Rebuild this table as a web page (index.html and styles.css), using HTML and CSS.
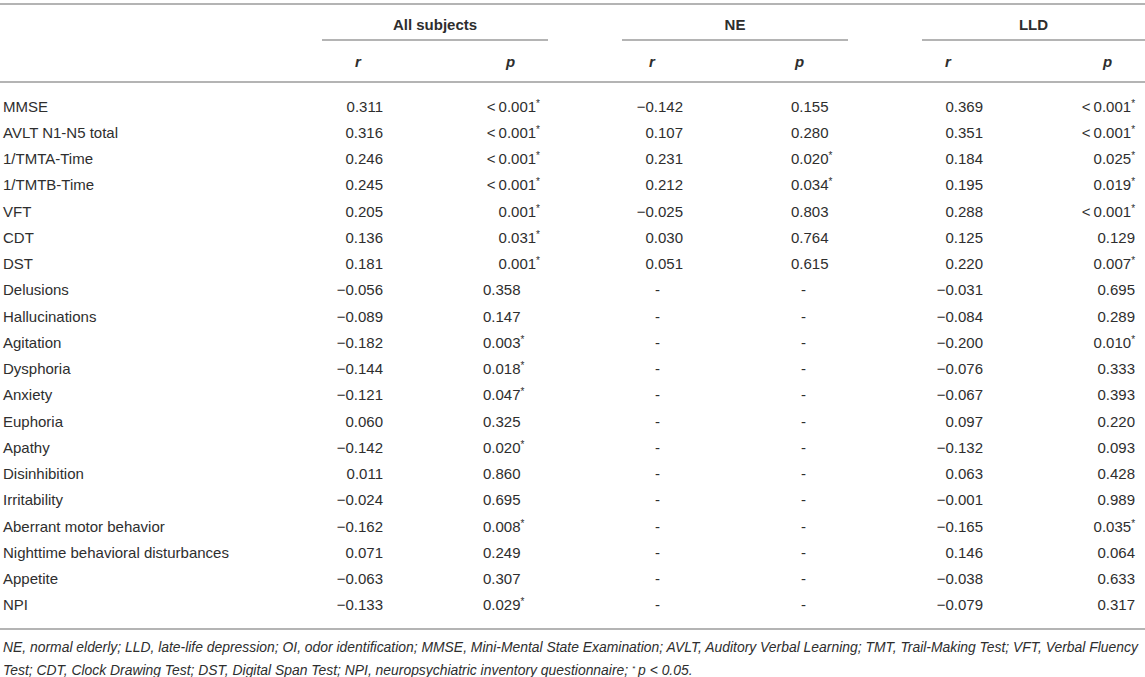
FILE: index.html
```html
<!DOCTYPE html>
<html lang="en">
<head>
    <meta charset="UTF-8">
    <meta name="viewport" content="width=device-width, initial-scale=1.0">
    <title>Correlations between OI and cognitive / NPI scores</title>
    <link rel="stylesheet" href="styles.css">
</head>
<body>
    <div class="wrap">
        <table class="corr">
            <colgroup>
                <col class="c-label">
                <col class="c-num"><col class="c-num">
                <col class="c-gap">
                <col class="c-num"><col class="c-num">
                <col class="c-gap">
                <col class="c-num"><col class="c-last">
            </colgroup>
            <thead>
                <tr class="groups">
                    <th></th>
                    <th colspan="2" class="grp">All subjects</th>
                    <th></th>
                    <th colspan="2" class="grp">NE</th>
                    <th></th>
                    <th colspan="2" class="grp">LLD</th>
                </tr>
                <tr class="stats">
                    <th></th>
                    <th class="h-r g1">r</th><th class="h-p g1">p</th>
                    <th></th>
                    <th class="h-r g2">r</th><th class="h-p g2">p</th>
                    <th></th>
                    <th class="h-r g3">r</th><th class="h-p g3">p</th>
                </tr>
            </thead>
            <tbody>
                <tr class="first">
                    <td class="label">MMSE</td>
                    <td class="r">0.311</td><td class="p-end">&lt;&thinsp;0.001<sup>*</sup></td><td></td>
                    <td class="r">&minus;0.142</td><td class="p-start">0.155</td><td></td>
                    <td class="r">0.369</td><td class="p-last">&lt;&thinsp;0.001<sup>*</sup></td>
                </tr>
                <tr>
                    <td class="label">AVLT N1-N5 total</td>
                    <td class="r">0.316</td><td class="p-end">&lt;&thinsp;0.001<sup>*</sup></td><td></td>
                    <td class="r">0.107</td><td class="p-start">0.280</td><td></td>
                    <td class="r">0.351</td><td class="p-last">&lt;&thinsp;0.001<sup>*</sup></td>
                </tr>
                <tr>
                    <td class="label">1/TMTA-Time</td>
                    <td class="r">0.246</td><td class="p-end">&lt;&thinsp;0.001<sup>*</sup></td><td></td>
                    <td class="r">0.231</td><td class="p-start">0.020<sup>*</sup></td><td></td>
                    <td class="r">0.184</td><td class="p-last">0.025<sup>*</sup></td>
                </tr>
                <tr>
                    <td class="label">1/TMTB-Time</td>
                    <td class="r">0.245</td><td class="p-end">&lt;&thinsp;0.001<sup>*</sup></td><td></td>
                    <td class="r">0.212</td><td class="p-start">0.034<sup>*</sup></td><td></td>
                    <td class="r">0.195</td><td class="p-last">0.019<sup>*</sup></td>
                </tr>
                <tr>
                    <td class="label">VFT</td>
                    <td class="r">0.205</td><td class="p-end">0.001<sup>*</sup></td><td></td>
                    <td class="r">&minus;0.025</td><td class="p-start">0.803</td><td></td>
                    <td class="r">0.288</td><td class="p-last">&lt;&thinsp;0.001<sup>*</sup></td>
                </tr>
                <tr>
                    <td class="label">CDT</td>
                    <td class="r">0.136</td><td class="p-end">0.031<sup>*</sup></td><td></td>
                    <td class="r">0.030</td><td class="p-start">0.764</td><td></td>
                    <td class="r">0.125</td><td class="p-last">0.129</td>
                </tr>
                <tr>
                    <td class="label">DST</td>
                    <td class="r">0.181</td><td class="p-end">0.001<sup>*</sup></td><td></td>
                    <td class="r">0.051</td><td class="p-start">0.615</td><td></td>
                    <td class="r">0.220</td><td class="p-last">0.007<sup>*</sup></td>
                </tr>
                <tr>
                    <td class="label">Delusions</td>
                    <td class="r">&minus;0.056</td><td class="p-mid">0.358</td><td></td>
                    <td class="dash">-</td><td class="dash-p">-</td><td></td>
                    <td class="r">&minus;0.031</td><td class="p-last">0.695</td>
                </tr>
                <tr>
                    <td class="label">Hallucinations</td>
                    <td class="r">&minus;0.089</td><td class="p-mid">0.147</td><td></td>
                    <td class="dash">-</td><td class="dash-p">-</td><td></td>
                    <td class="r">&minus;0.084</td><td class="p-last">0.289</td>
                </tr>
                <tr>
                    <td class="label">Agitation</td>
                    <td class="r">&minus;0.182</td><td class="p-mid">0.003<sup>*</sup></td><td></td>
                    <td class="dash">-</td><td class="dash-p">-</td><td></td>
                    <td class="r">&minus;0.200</td><td class="p-last">0.010<sup>*</sup></td>
                </tr>
                <tr>
                    <td class="label">Dysphoria</td>
                    <td class="r">&minus;0.144</td><td class="p-mid">0.018<sup>*</sup></td><td></td>
                    <td class="dash">-</td><td class="dash-p">-</td><td></td>
                    <td class="r">&minus;0.076</td><td class="p-last">0.333</td>
                </tr>
                <tr>
                    <td class="label">Anxiety</td>
                    <td class="r">&minus;0.121</td><td class="p-mid">0.047<sup>*</sup></td><td></td>
                    <td class="dash">-</td><td class="dash-p">-</td><td></td>
                    <td class="r">&minus;0.067</td><td class="p-last">0.393</td>
                </tr>
                <tr>
                    <td class="label">Euphoria</td>
                    <td class="r">0.060</td><td class="p-mid">0.325</td><td></td>
                    <td class="dash">-</td><td class="dash-p">-</td><td></td>
                    <td class="r">0.097</td><td class="p-last">0.220</td>
                </tr>
                <tr>
                    <td class="label">Apathy</td>
                    <td class="r">&minus;0.142</td><td class="p-mid">0.020<sup>*</sup></td><td></td>
                    <td class="dash">-</td><td class="dash-p">-</td><td></td>
                    <td class="r">&minus;0.132</td><td class="p-last">0.093</td>
                </tr>
                <tr>
                    <td class="label">Disinhibition</td>
                    <td class="r">0.011</td><td class="p-mid">0.860</td><td></td>
                    <td class="dash">-</td><td class="dash-p">-</td><td></td>
                    <td class="r">0.063</td><td class="p-last">0.428</td>
                </tr>
                <tr>
                    <td class="label">Irritability</td>
                    <td class="r">&minus;0.024</td><td class="p-mid">0.695</td><td></td>
                    <td class="dash">-</td><td class="dash-p">-</td><td></td>
                    <td class="r">&minus;0.001</td><td class="p-last">0.989</td>
                </tr>
                <tr>
                    <td class="label">Aberrant motor behavior</td>
                    <td class="r">&minus;0.162</td><td class="p-mid">0.008<sup>*</sup></td><td></td>
                    <td class="dash">-</td><td class="dash-p">-</td><td></td>
                    <td class="r">&minus;0.165</td><td class="p-last">0.035<sup>*</sup></td>
                </tr>
                <tr>
                    <td class="label">Nighttime behavioral disturbances</td>
                    <td class="r">0.071</td><td class="p-mid">0.249</td><td></td>
                    <td class="dash">-</td><td class="dash-p">-</td><td></td>
                    <td class="r">0.146</td><td class="p-last">0.064</td>
                </tr>
                <tr>
                    <td class="label">Appetite</td>
                    <td class="r">&minus;0.063</td><td class="p-mid">0.307</td><td></td>
                    <td class="dash">-</td><td class="dash-p">-</td><td></td>
                    <td class="r">&minus;0.038</td><td class="p-last">0.633</td>
                </tr>
                <tr class="last">
                    <td class="label">NPI</td>
                    <td class="r">&minus;0.133</td><td class="p-mid">0.029<sup>*</sup></td><td></td>
                    <td class="dash">-</td><td class="dash-p">-</td><td></td>
                    <td class="r">&minus;0.079</td><td class="p-last">0.317</td>
                </tr>
            </tbody>
        </table>
        <p class="footnote">NE, normal elderly; LLD, late-life depression; OI, odor identification; MMSE, Mini-Mental State Examination; AVLT, Auditory Verbal Learning; TMT, Trail-Making Test; VFT, Verbal Fluency Test; CDT, Clock Drawing Test; DST, Digital Span Test; NPI, neuropsychiatric inventory questionnaire; <span class="fn-mark">*</span>p &lt; 0.05.</p>
    </div>
</body>
</html>
```

FILE: styles.css
```css
body {
    margin: 0;
    background-color: #fff;
    color: #2e2e2e;
    font-family: 'Liberation Sans', Arial, sans-serif;
    font-size: 15px;
}
.wrap {
    width: 1145px;
    padding-top: 3px;
}
.corr {
    width: 1145px;
    table-layout: fixed;
    border-collapse: separate;
    border-spacing: 0;
    border-top: 2px solid #b4b4b4;
    border-bottom: 2px solid #b4b4b4;
}
.c-label { width: 322px; }
.c-num { width: 113px; }
.c-gap { width: 74px; }
.c-last { width: 110px; }
.corr th,
.corr td {
    padding: 0;
    vertical-align: middle;
    white-space: nowrap;
}
.groups th {
    height: 30px;
    padding-top: 4px;
    border-bottom: 2px solid transparent;
    font-weight: bold;
    text-align: center;
}
.groups th.grp {
    border-bottom-color: #b4b4b4;
}
.stats th {
    height: 40px;
    border-bottom: 2px solid #b4b4b4;
    font-weight: bold;
    font-style: italic;
    text-align: left;
}
.h-r.g1 { padding-left: 33px; }
.h-r.g2 { padding-left: 27px; }
.h-r.g3 { padding-left: 23px; }
.h-p.g1 { padding-left: 71px; }
.h-p.g2 { padding-left: 60px; }
.h-p.g3 { padding-left: 68px; }
.corr td {
    height: 26.25px;
}
.corr tr.first td {
    padding-top: 10px;
}
.corr tr.last td {
    padding-bottom: 10px;
}
.label {
    padding-left: 3px !important;
}
.r {
    text-align: right;
    padding-right: 52px !important;
}
.p-end {
    text-align: right;
    padding-right: 8px !important;
}
.p-mid {
    padding-left: 48px !important;
}
.p-start {
    padding-left: 56px !important;
}
.p-last {
    text-align: right;
    padding-right: 10px !important;
}
.dash {
    padding-left: 33px !important;
}
.dash-p {
    padding-left: 66px !important;
}
sup {
    font-size: 10px;
    line-height: 0;
    vertical-align: 5px;
}
.footnote {
    margin: 6px 0 0;
    padding-left: 3px;
    font-size: 13.9px;
    font-style: italic;
    line-height: 23px;
}
.fn-mark {
    font-size: 8px;
    line-height: 0;
    vertical-align: 4px;
    margin-right: 3px;
}
```
